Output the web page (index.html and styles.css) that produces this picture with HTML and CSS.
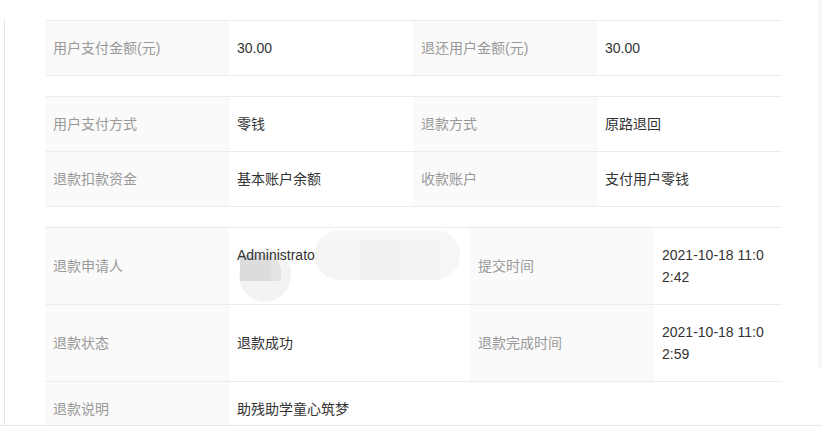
FILE: index.html
```html
<!DOCTYPE html>
<html lang="zh-CN">
<head>
<meta charset="utf-8">
<title>退款详情</title>
<link rel="stylesheet" href="styles.css">
</head>
<body>
<div class="modal">
  <div class="modal-body">
    <div class="panel">
      <div class="kv cols-even">
        <div class="cell label">用户支付金额(元)</div>
        <div class="cell value">30.00</div>
        <div class="cell label">退还用户金额(元)</div>
        <div class="cell value">30.00</div>
      </div>
      <div class="kv cols-even">
        <div class="cell label">用户支付方式</div>
        <div class="cell value">零钱</div>
        <div class="cell label">退款方式</div>
        <div class="cell value">原路退回</div>
        <div class="cell label">退款扣款资金</div>
        <div class="cell value">基本账户余额</div>
        <div class="cell label">收款账户</div>
        <div class="cell value">支付用户零钱</div>
      </div>
      <div class="kv cols-wide">
        <div class="cell label">退款申请人</div>
        <div class="cell value top redacted">
          <div class="blur-circle"></div>
          <div class="blur-rect"></div>
          <span class="name">Administrator</span>
          <div class="blur-pill"><i class="b1"></i><i class="b2"></i><i class="b3"></i></div>
        </div>
        <div class="cell label">提交时间</div>
        <div class="cell value time">2021-10-18 11:02:42</div>
        <div class="cell label">退款状态</div>
        <div class="cell value">退款成功</div>
        <div class="cell label">退款完成时间</div>
        <div class="cell value time">2021-10-18 11:02:59</div>
        <div class="cell label">退款说明</div>
        <div class="cell value span3">助残助学童心筑梦</div>
      </div>
    </div>
    <div class="scroll-track"></div>
  </div>
</div>
</body>
</html>
```

FILE: styles.css
```css
html, body {
  margin: 0;
  padding: 0;
  background: #ffffff;
}

body {
  font-family: "Liberation Sans", "Noto Sans CJK SC", sans-serif;
  font-size: 14px;
  color: #333333;
}

.modal {
  width: 822px;
  height: 447px;
  overflow: hidden;
}

.modal-body {
  display: flex;
  height: 425px;
  border-bottom: 1px solid #e8e8e8;
  overflow: hidden;
}

.panel {
  flex: 1;
  margin: 20px 0 0 4px;
  border-left: 1px solid #e6e6e6;
  padding: 0 36px 0 40px;
  overflow: hidden;
}

.scroll-track {
  width: 4px;
  height: 367px;
  background: #f8f8f8;
  border-left: 1px solid #f2f2f2;
  box-sizing: border-box;
}

.kv {
  display: grid;
  border-top: 1px solid #ebebeb;
  margin-bottom: 20px;
}

.cols-even {
  grid-template-columns: 184px 184px 184px 185px;
}

.cols-wide {
  grid-template-columns: 184px 241px 184px 128px;
}

.cell {
  display: flex;
  align-items: center;
  padding: 16px 8px;
  line-height: 22px;
  border-bottom: 1px solid #ebebeb;
  min-width: 0;
}

.label {
  background: #fafafa;
  color: #999999;
}

.value {
  color: #333333;
}

.time {
  padding-right: 14px;
  word-break: break-all;
}

.span3 {
  grid-column: span 3;
}

.top {
  align-items: flex-start;
}

.redacted {
  position: relative;
}

.name {
  position: relative;
}

.blur-pill {
  position: absolute;
  left: 86px;
  top: 2px;
  width: 145px;
  height: 50px;
  border-radius: 25px;
  background: #f6f6f6;
  overflow: hidden;
}

.blur-pill i {
  position: absolute;
  top: 10px;
  height: 40px;
}

.blur-pill .b1 {
  left: 0;
  width: 45px;
  background: #f4f4f4;
}

.blur-pill .b2 {
  left: 45px;
  width: 40px;
  background: #f0f0f0;
}

.blur-pill .b3 {
  left: 85px;
  width: 40px;
  background: #f2f2f2;
}

.blur-circle {
  position: absolute;
  left: 10px;
  top: 20px;
  width: 52px;
  height: 54px;
  border-radius: 50%;
  background: #f3f3f3;
}

.blur-rect {
  position: absolute;
  left: 11px;
  top: 27px;
  width: 41px;
  height: 26px;
  border-top-right-radius: 16px;
  background: linear-gradient(90deg, #dcdcdc 0, #dcdcdc 75%, #e3e3e3 75%);
}
```
